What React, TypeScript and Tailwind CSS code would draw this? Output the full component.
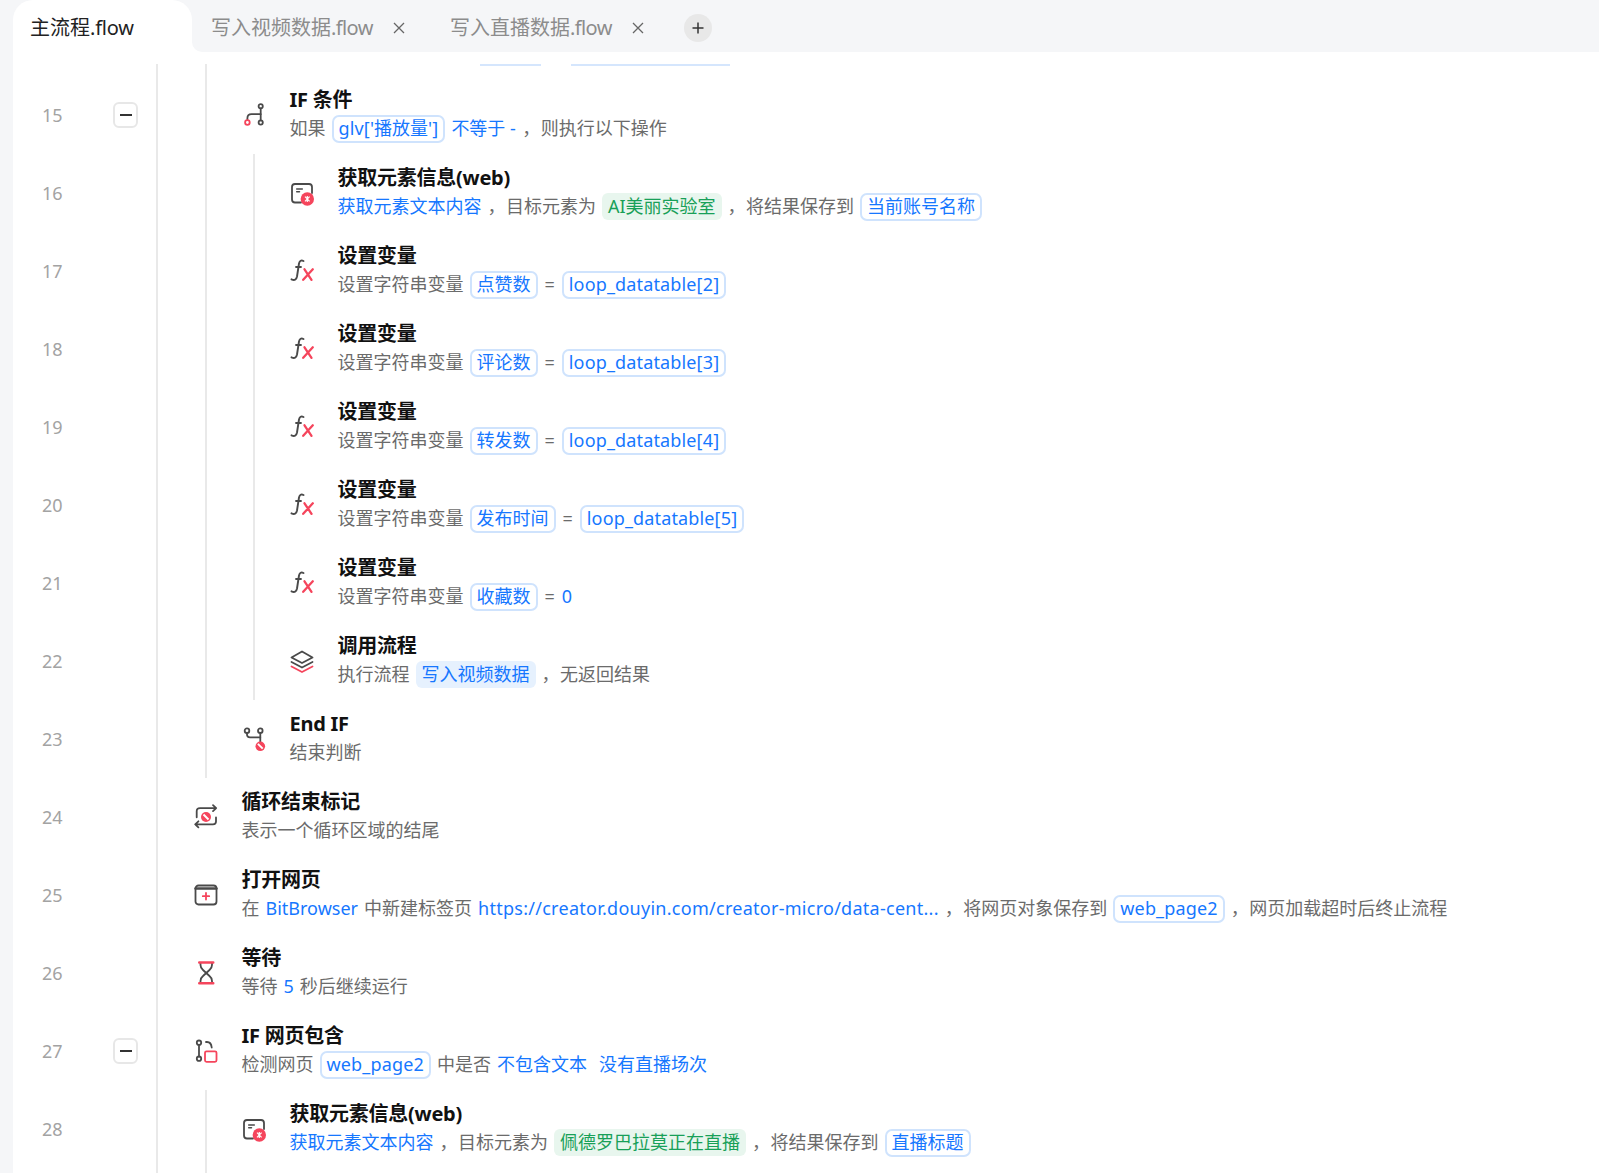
import React from "react";

const DARK = "#4a4a4a";
const RED = "#f5455c";

type Tok = { t: string; k?: "text" | "link" | "tag" | "green" | "fill" | "comma" | "eq" | "space" };
type Row = { n: number; level: number; icon: string; title: string; sub: Tok[]; fold?: boolean };

const T = (t: string): Tok => ({ t, k: "text" });
const L = (t: string): Tok => ({ t, k: "link" });
const G = (t: string): Tok => ({ t, k: "tag" });
const N = (t: string): Tok => ({ t, k: "green" });
const F = (t: string): Tok => ({ t, k: "fill" });
const C: Tok = { t: "，", k: "comma" };
const E: Tok = { t: "=", k: "eq" };
const S: Tok = { t: "", k: "space" };

const setVar = (n: number, name: string, val: Tok): Row => ({
  n,
  level: 2,
  icon: "fx",
  title: "设置变量",
  sub: [T("设置字符串变量"), G(name), E, val],
});

const rows: Row[] = [
  { n: 15, level: 1, icon: "if", title: "IF 条件", fold: true, sub: [T("如果"), G("glv['播放量']"), L("不等于 -"), C, T("则执行以下操作")] },
  { n: 16, level: 2, icon: "element", title: "获取元素信息(web)", sub: [L("获取元素文本内容"), C, T("目标元素为"), N("AI美丽实验室"), C, T("将结果保存到"), G("当前账号名称")] },
  setVar(17, "点赞数", G("loop_datatable[2]")),
  setVar(18, "评论数", G("loop_datatable[3]")),
  setVar(19, "转发数", G("loop_datatable[4]")),
  setVar(20, "发布时间", G("loop_datatable[5]")),
  setVar(21, "收藏数", L("0")),
  { n: 22, level: 2, icon: "layers", title: "调用流程", sub: [T("执行流程"), F("写入视频数据"), C, T("无返回结果")] },
  { n: 23, level: 1, icon: "endif", title: "End IF", sub: [T("结束判断")] },
  { n: 24, level: 0, icon: "loop", title: "循环结束标记", sub: [T("表示一个循环区域的结尾")] },
  { n: 25, level: 0, icon: "open", title: "打开网页", sub: [T("在"), { t: "BitBrowser", k: "link" }, T("中新建标签页"), L("https://creator.douyin.com/creator-micro/data-cent..."), C, T("将网页对象保存到"), G("web_page2"), C, T("网页加载超时后终止流程")] },
  { n: 26, level: 0, icon: "wait", title: "等待", sub: [T("等待"), L("5"), T("秒后继续运行")] },
  { n: 27, level: 0, icon: "ifweb", title: "IF 网页包含", fold: true, sub: [T("检测网页"), G("web_page2"), T("中是否"), L("不包含文本"), S, L("没有直播场次")] },
  { n: 28, level: 1, icon: "element", title: "获取元素信息(web)", sub: [L("获取元素文本内容"), C, T("目标元素为"), N("佩德罗巴拉莫正在直播"), C, T("将结果保存到"), G("直播标题")] },
];

function NoSign({ cx, cy, r }: { cx: number; cy: number; r: number }) {
  return (
    <g>
      <circle cx={cx} cy={cy} r={r} fill={RED} />
      <path d={`M${cx - r * 0.5} ${cy - r * 0.5}L${cx + r * 0.5} ${cy + r * 0.5}`} stroke="#fff" strokeWidth="1.9" />
    </g>
  );
}

function Icon({ name }: { name: string }) {
  const s = { fill: "none", stroke: DARK, strokeWidth: 1.8, strokeLinecap: "round" as const, strokeLinejoin: "round" as const };
  const r = { ...s, stroke: RED };
  let c: React.ReactNode = null;
  if (name === "if")
    c = (
      <>
        <circle cx="18.7" cy="3.2" r="2.1" {...s} />
        <circle cx="18.7" cy="19.5" r="2.1" {...s} />
        <path d="M18.7 5.3V17.4" {...s} />
        <path d="M18.7 11.2H9.5Q5.4 11.2 5.4 15.2V17" {...s} />
        <circle cx="5.4" cy="19.5" r="2.3" {...r} />
      </>
    );
  if (name === "element")
    c = (
      <>
        <path d="M11 21.500H5Q2 21.500 2 18.500V6Q2 3 5 3H19Q22 3 22 6V12" {...s} />
        <path d="M6.700 8H12.300M6.700 10.800H9.500" {...s} strokeWidth={1.500} />
        <circle cx="17.300" cy="18" r="6.700" fill={RED} />
        <path d="M15 15.700L19.600 20.300M19.600 15.700L15 20.300M17.300 14.900V21.100" stroke="#fff" strokeWidth="1.200" />
      </>
    );
  if (name === "fx")
    c = (
      <>
        <path d="M13.500 2Q10 0.300 9 4.500L7 17.500Q6 22.500 1.500 20.300" {...s} strokeWidth={1.900} />
        <path d="M6 8H11" {...s} strokeWidth={1.800} />
        <path d="M14.500 10.300L21.500 20.800M22.800 10.300L13.200 20.800" {...r} strokeWidth={2.300} />
      </>
    );
  if (name === "layers")
    c = (
      <>
        <path d="M12 2.500L22.500 8.500L12 14L1.500 8.500Z" {...s} />
        <path d="M1.500 13L12 18.500L22.500 13" {...s} />
        <path d="M1.500 17.500L12 23L22.500 17.500" {...r} />
      </>
    );
  if (name === "endif")
    c = (
      <>
        <circle cx="5" cy="3.700" r="2.300" {...s} />
        <circle cx="18.300" cy="3.700" r="2.300" {...s} />
        <path d="M18.300 6V15" {...s} />
        <path d="M5 6V7.500Q5 10.300 8 10.300H18.300" {...s} />
        <NoSign cx={18.300} cy={19.300} r={4.800} />
      </>
    );
  if (name === "loop")
    c = (
      <>
        <path d="M2.700 11.500V5.500Q2.700 2.300 6 2.300H22.200M19 -0.700L22.200 2.300L19 5.300" {...s} transform="translate(0 0.800)" />
        <path d="M22 12.500V16.500Q22 19.300 19 19.300H1.200M4.400 16.300L1.200 19.300L4.400 22.300" {...s} />
        <NoSign cx={12} cy={12} r={5} />
      </>
    );
  if (name === "open")
    c = (
      <>
        <rect x="1.500" y="2.500" width="21" height="19" rx="3" {...s} />
        <path d="M1.500 5.500H22.500" {...s} strokeWidth={2.400} />
        <path d="M12 10V16.500M8.800 13.200H15.200" {...r} />
      </>
    );
  if (name === "wait")
    c = (
      <>
        <path d="M6.500 2V4Q6.500 7 9 9L15.500 15Q18 17 18 20V22" {...s} />
        <path d="M18 2V4Q18 7 15.500 9L9 15Q6.500 17 6.500 20V22" {...s} />
        <path d="M5.200 1.500H19.300M5.200 22.200H19.300" {...r} strokeWidth={2.400} />
      </>
    );
  if (name === "ifweb")
    c = (
      <>
        <circle cx="5" cy="3.700" r="2.200" {...s} />
        <circle cx="5" cy="19.700" r="2.200" {...s} />
        <path d="M5 5.900V17.500" {...s} />
        <path d="M12 3H13Q17.200 3 17.700 8.500" {...s} />
        <rect x="11" y="12.300" width="11.500" height="10.500" rx="1.500" {...r} />
      </>
    );
  return (
    <svg width="24" height="24" viewBox="0 0 24 24" className="overflow-visible">
      {c}
    </svg>
  );
}

function Mixed({ t, tight }: { t: string; tight?: boolean }) {
  if (t === "BitBrowser" || t === "0" || t === "5") return <>{t}</>;
  const parts = t.split(/([\x21-\x7e]+)/);
  return (
    <>
      {parts.map((p, i) =>
        i % 2 === 1 ? (
          <span key={i} className={tight ? "tracking-[0.15px]" : "tracking-[0.27px]"}>
            {p}
          </span>
        ) : (
          <React.Fragment key={i}>{p}</React.Fragment>
        ),
      )}
    </>
  );
}

function Token({ tok }: { tok: Tok }) {
  if (tok.k === "link")
    return (
      <span className="text-[#1677ff]">
        <Mixed t={tok.t} />
      </span>
    );
  if (tok.k === "tag")
    return (
      <span className="h-[28px] leading-[23px] px-[5px] rounded-[7px] border-2 border-[#cfe3fd] text-[#1677ff]">
        <Mixed t={tok.t} tight />
      </span>
    );
  if (tok.k === "green")
    return <span className="h-[27px] leading-[26px] px-[6px] rounded-[6px] bg-[#e8f6ee] text-[#18a058]">{tok.t}</span>;
  if (tok.k === "fill")
    return <span className="h-[27px] leading-[26px] px-[6px] rounded-[6px] bg-[#e6f1fe] text-[#1677ff]">{tok.t}</span>;
  if (tok.k === "comma") return <span className="w-[12.5px] overflow-visible">{tok.t}</span>;
  if (tok.k === "eq") return <span className="mx-[1px]">{tok.t}</span>;
  if (tok.k === "space") return <span className="w-0" />;
  return <span>{tok.t}</span>;
}

function Guide({ active }: { active: boolean }) {
  return (
    <div className="w-[48px] h-full shrink-0 flex justify-center">
      {active && <div className="w-[2px] h-full bg-[#e9e9e9]" />}
    </div>
  );
}

function FlowRow({ row }: { row: Row }) {
  return (
    <div className="flex h-[78px] shrink-0">
      <div className="w-[143px] shrink-0 flex items-center text-[18px] text-[#a3a3a3] pl-[29px]">
        <span className="w-[71px]">{row.n}</span>
        {row.fold && (
          <div className="w-[25px] h-[26px] flex items-center justify-center rounded-[6px] border-2 border-[#e7e7e7]">
            <div className="w-[12px] h-[2px] bg-[#333]" />
          </div>
        )}
      </div>
      <div className="w-[2px] shrink-0 bg-[#e9e9e9]" />
      <div className="flex min-w-0 pl-[24px]">
        {Array.from({ length: row.level }).map((_, i) => (
          <Guide key={i} active />
        ))}
        <div className="w-[48px] shrink-0 flex items-center justify-center">
          <Icon name={row.icon} />
        </div>
        <div className="pl-[12px] pt-[8px] whitespace-nowrap -ml-[0.5px]">
          <div className="h-[30px] mt-[1px] leading-[30px] text-[20px] font-bold text-[#111] tracking-[-0.25px]">{row.title}</div>
          <div className="h-[29px] -mt-[1px] flex items-center gap-[6px] text-[18px] text-[#6b6b6b]">
            {row.sub.map((tok, i) => (
              <Token key={i} tok={tok} />
            ))}
          </div>
        </div>
      </div>
    </div>
  );
}

function Tab({ label, className }: { label: string; className: string }) {
  return (
    <div className={`flex items-center ${className}`}>
      <span className="text-[20px] text-[#8c8c8c] whitespace-nowrap">
        {label}
        <span className="tracking-[-0.6px]">.flow</span>
      </span>
      <svg className="ml-[20px]" width="12" height="12" viewBox="0 0 12 12">
        <path d="M1 1L11 11M11 1L1 11" stroke="#666" strokeWidth="1.300" />
      </svg>
    </div>
  );
}

export default function App() {
  return (
    <div
      className="w-[1599px] h-[1173px] overflow-hidden bg-[#f5f6f8] pl-[13px] flex flex-col"
      style={{ fontFamily: '"Noto Sans","Noto Sans CJK SC",sans-serif' }}
    >
      <div className="h-[52px] shrink-0 flex">
        <div className="w-[179px] shrink-0 bg-white rounded-t-[20px] pl-[17px] pt-[4px] flex items-center text-[20px] text-[#222] whitespace-nowrap">
          主流程<span className="tracking-[-0.2px]">.flow</span>
        </div>
        <div className="flex-1 bg-white">
          <div className="h-full bg-[#f5f6f8] rounded-bl-[10px] flex items-center pl-[19px] pt-[4px]">
            <Tab label="写入视频数据" className="w-[239px]" />
            <Tab label="写入直播数据" className="w-[234px]" />
            <div className="w-[28px] h-[28px] rounded-full bg-[#e8e8e8] flex items-center justify-center">
              <svg width="12" height="12" viewBox="0 0 12 12">
                <path d="M6 0.500V11.500M0.500 6H11.500" stroke="#333" strokeWidth="1.500" />
              </svg>
            </div>
          </div>
        </div>
      </div>
      <div className="flex-1 min-h-0 bg-white flex flex-col pt-[12px] overflow-hidden">
        <div className="h-[12px] shrink-0 flex">
          <div className="w-[143px] shrink-0" />
          <div className="w-[2px] shrink-0 bg-[#e9e9e9]" />
          <div className="pl-[24px] flex">
            <Guide active />
            <div className="flex items-start pl-[250px] gap-[30px]">
              <div className="w-[61px] h-[2px] bg-[#d5e6fd]" />
              <div className="w-[159px] h-[2px] bg-[#d5e6fd]" />
            </div>
          </div>
        </div>
        {rows.map((r) => (
          <FlowRow key={r.n} row={r} />
        ))}
        <div className="flex-1 flex">
          <div className="w-[143px] shrink-0" />
          <div className="w-[2px] shrink-0 bg-[#e9e9e9]" />
          <div className="pl-[24px] flex">
            <Guide active />
          </div>
        </div>
      </div>
    </div>
  );
}
